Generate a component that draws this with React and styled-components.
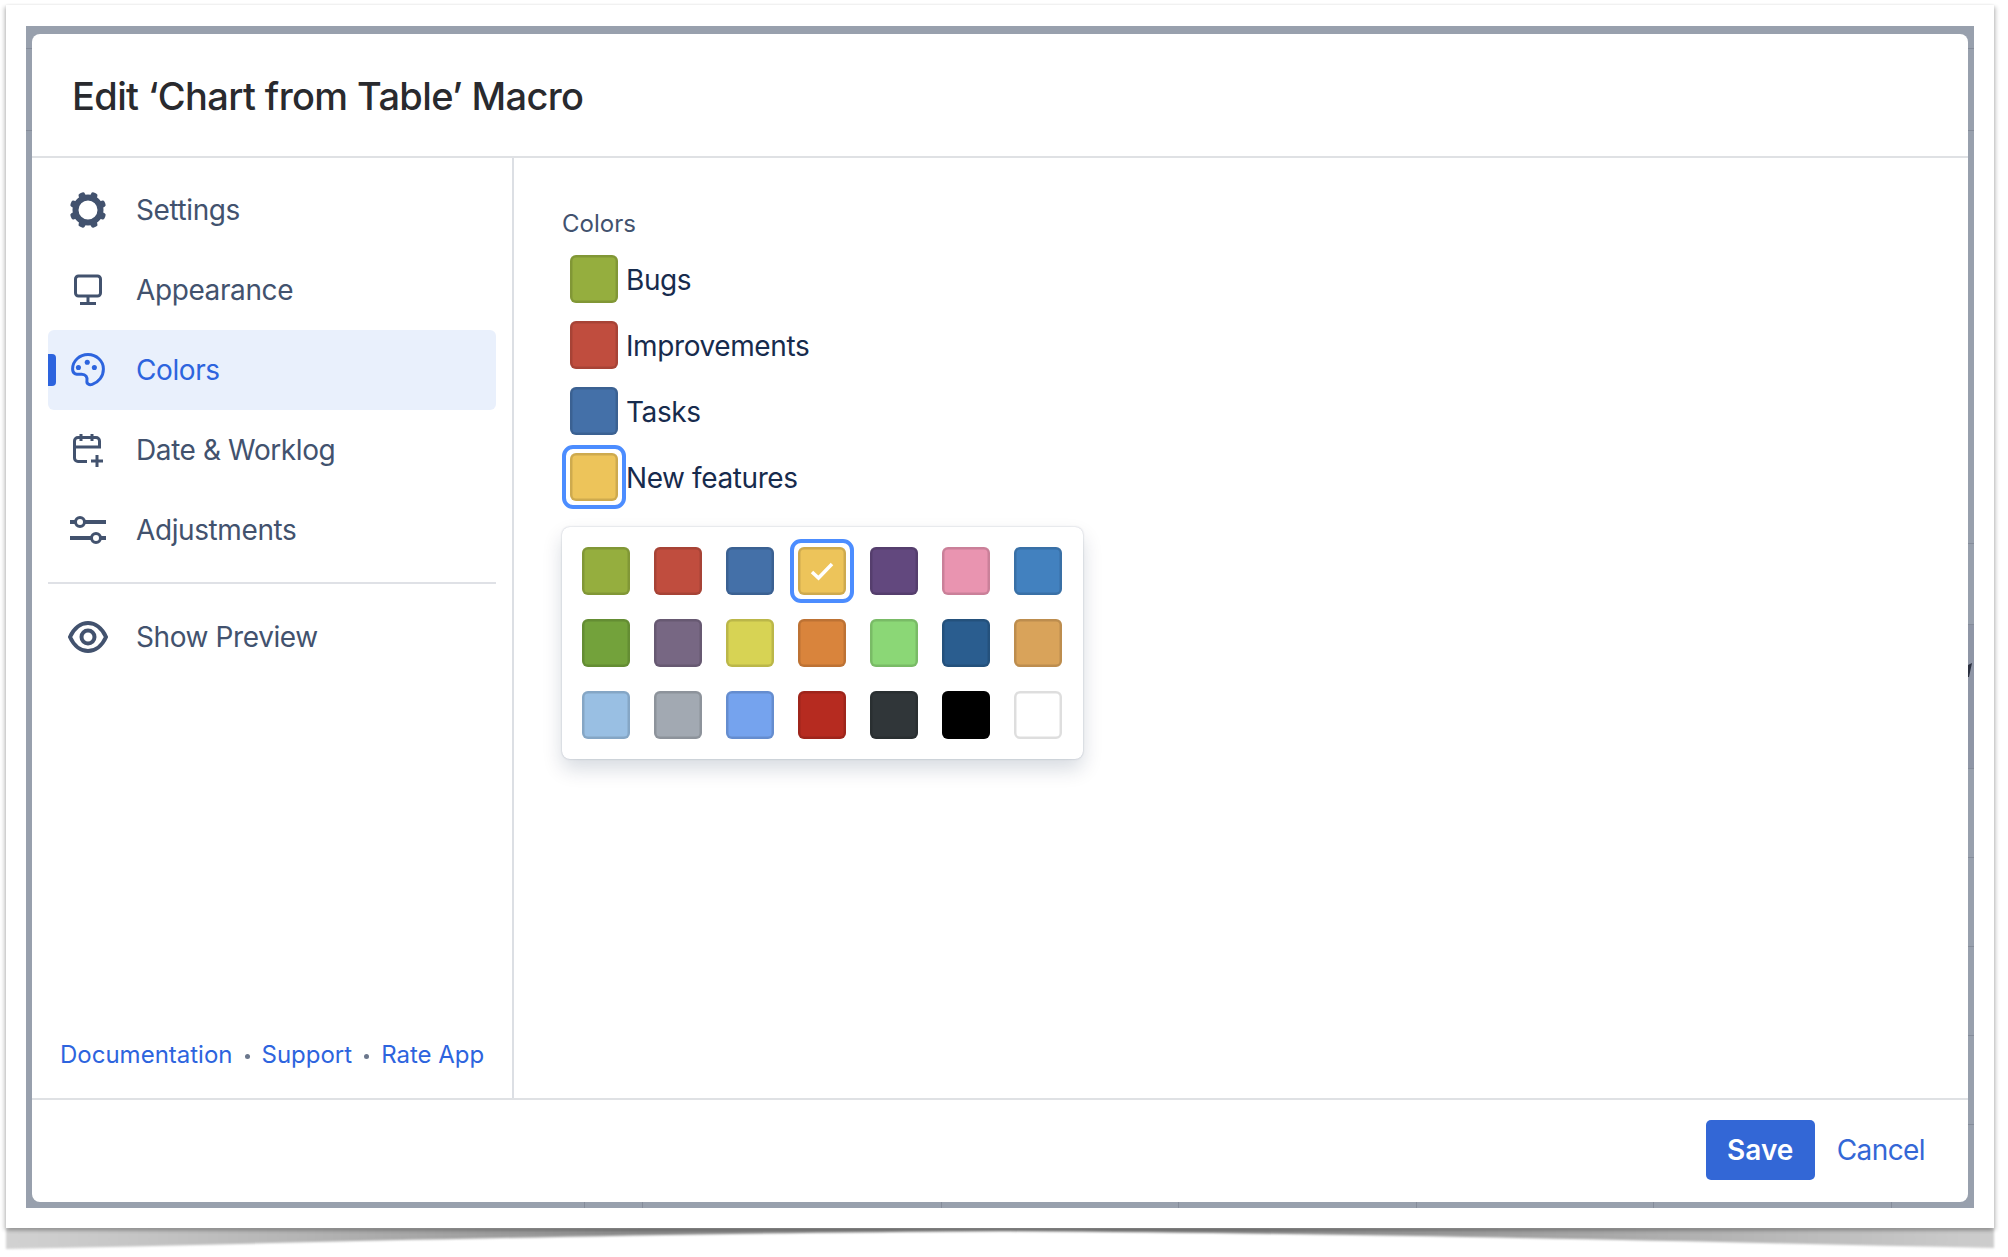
import React from "react";
import styled, { createGlobalStyle } from "styled-components";

const NAV_TEXT = "#42526e";
const BLUE = "#2d64de";

const legend = [
  { name: "Bugs", color: "#95ae3e" },
  { name: "Improvements", color: "#c04d3e" },
  { name: "Tasks", color: "#4470a8" },
  { name: "New features", color: "#edc45a", focused: true },
];

const palette = [
  "#95ae3e", "#c04d3e", "#4470a8", "#edc45a", "#62487e", "#e994b0", "#4281bf",
  "#73a23b", "#776783", "#d7d354", "#d9843c", "#8bd776", "#2a5d8f", "#d9a35a",
  "#99bfe3", "#a2a9b2", "#75a3ee", "#b62b20", "#303639", "#000000", "#ffffff",
];

const GearIcon = () => (
  <svg width="40" height="40" viewBox="0 0 40 40">
    <circle cx="20" cy="20" r="12.5" fill="none" stroke="currentColor" strokeWidth="6" />
    {[22.5, 67.5, 112.5, 157.5, 202.5, 247.5, 292.5, 337.5].map((angle) => (
      <rect
        key={angle}
        x="16.6"
        y="1.6"
        width="6.8"
        height="8"
        rx="2.2"
        fill="currentColor"
        transform={`rotate(${angle} 20 20)`}
      />
    ))}
  </svg>
);

const MonitorIcon = () => (
  <svg width="32" height="32" viewBox="0 0 32 32" fill="none" stroke="currentColor">
    <rect x="3.5" y="2" width="25" height="20" rx="3" strokeWidth="3" />
    <path d="M16 22v7" strokeWidth="3" />
    <path d="M8 29.5h16" strokeWidth="3" />
  </svg>
);

const PaletteIcon = () => (
  <svg width="34" height="34" viewBox="0 0 32 32" fill="none" stroke="currentColor" strokeWidth="2.8">
    <path d="M16 1.5C8 1.5 1.5 7.5 1.5 15c0 6 5.5 5 8.5 5 4 0 5.5 3 5 6-.5 3 2 4.500 5 3.500 6-2 10.500-7.500 10.500-14.500C30.500 7.500 24 1.500 16 1.500Z" />
    <circle cx="7" cy="13.700" r="2.400" fill="currentColor" stroke="none" />
    <circle cx="15.300" cy="8.700" r="2.400" fill="currentColor" stroke="none" />
    <circle cx="22" cy="13.700" r="2.400" fill="currentColor" stroke="none" />
  </svg>
);

const CalendarPlusIcon = () => (
  <svg width="34" height="36" viewBox="0 0 34 36" fill="none" stroke="currentColor" strokeWidth="3">
    <path d="M16 29.500H7A3.500 3.500 0 0 1 3.500 26V9A3.500 3.500 0 0 1 7 5.500H25A3.500 3.500 0 0 1 28.500 9V15H3.500" />
    <path d="M10 2v7M21 2v7" />
    <path d="M20 29h12M26 23v12" />
  </svg>
);

const SlidersIcon = () => (
  <svg width="36" height="28" viewBox="0 0 36 28" stroke="currentColor">
    <path d="M0 6h36M0 22h36" strokeWidth="4" />
    <circle cx="10" cy="6" r="4.500" fill="#fff" strokeWidth="3" />
    <circle cx="26" cy="22" r="4.500" fill="#fff" strokeWidth="3" />
  </svg>
);

const EyeIcon = () => (
  <svg width="40" height="32" viewBox="0 0 40 32" fill="none" stroke="currentColor" strokeWidth="4">
    <path d="M2 16C6 7 13 2 20 2s14 5 18 14c-4 9-11 14-18 14S6 25 2 16Z" />
    <circle cx="20" cy="16" r="6.500" />
  </svg>
);

const CheckIcon = () => (
  <svg width="24" height="20" viewBox="0 0 24 20" fill="none" stroke="#fff" strokeWidth="3.500">
    <path d="M2 11l6.500 6L22 3" />
  </svg>
);

const App = () => (
  <>
    <GlobalStyle />
    <Page>
      <CurlShadow viewBox="0 0 2008 40" preserveAspectRatio="none">
        <defs>
          <linearGradient id="curl" x1="0" x2="1" y1="0" y2="0">
            <stop offset="0" stopColor="#d2d2d2" />
            <stop offset="0.15" stopColor="#b4b4b4" />
            <stop offset="0.32" stopColor="#8c8c8c" />
            <stop offset="0.62" stopColor="#8a8a8a" />
            <stop offset="0.8" stopColor="#a8a8a8" />
            <stop offset="1" stopColor="#cdcdcd" />
          </linearGradient>
        </defs>
        <path
          d="M6 0H1994V20C1700 14 1400 6 1000 3C600 6 300 15 6 21Z"
          fill="url(#curl)"
        />
      </CurlShadow>
      <Sheet>
        <Frame>
          <Modal>
            <Header>
              <Title>Edit ‘Chart from Table’ Macro</Title>
            </Header>
            <Body>
              <Sidebar>
                <NavItem>
                  <NavIcon><GearIcon /></NavIcon>
                  Settings
                </NavItem>
                <NavItem>
                  <NavIcon><MonitorIcon /></NavIcon>
                  Appearance
                </NavItem>
                <NavItem $active>
                  <NavIcon><PaletteIcon /></NavIcon>
                  Colors
                </NavItem>
                <NavItem>
                  <NavIcon><CalendarPlusIcon /></NavIcon>
                  Date &amp; Worklog
                </NavItem>
                <NavItem>
                  <NavIcon><SlidersIcon /></NavIcon>
                  Adjustments
                </NavItem>
                <NavDivider />
                <NavItem>
                  <NavIcon><EyeIcon /></NavIcon>
                  Show Preview
                </NavItem>
                <SideLinks>
                  <TextLink>Documentation</TextLink>
                  <Dot />
                  <TextLink>Support</TextLink>
                  <Dot />
                  <TextLink>Rate App</TextLink>
                </SideLinks>
              </Sidebar>
              <Content>
                <FieldLabel>Colors</FieldLabel>
                <Legend>
                  {legend.map((item) => (
                    <LegendRow key={item.name}>
                      <Swatch $color={item.color} $focused={item.focused} />
                      <LegendName>{item.name}</LegendName>
                    </LegendRow>
                  ))}
                </Legend>
                <Picker>
                  {palette.map((color, i) => (
                    <Swatch key={i} $color={color} $focused={i === 3}>
                      {i === 3 && <CheckIcon />}
                    </Swatch>
                  ))}
                </Picker>
              </Content>
            </Body>
            <Footer>
              <SaveButton>Save</SaveButton>
              <CancelLink>Cancel</CancelLink>
            </Footer>
          </Modal>
        </Frame>
      </Sheet>
    </Page>
  </>
);

const GlobalStyle = createGlobalStyle`
  html, body {
    margin: 0;
    height: 100%;
    background: #fff;
    overflow: hidden;
  }
  * {
    box-sizing: border-box;
  }
`;

const Page = styled.div`
  position: relative;
  width: 2008px;
  height: 1257px;
  padding: 5px 14px 29px 6px;
  font-family: Inter, "Liberation Sans", sans-serif;
`;

const CurlShadow = styled.svg`
  position: absolute;
  left: 0;
  top: 1228px;
  width: 2008px;
  height: 40px;
  filter: blur(1px);
`;

const Sheet = styled.div`
  position: relative;
  height: 100%;
  padding: 21px 20px 20px 20px;
  background: #fff;
  box-shadow: -2px 2px 4px rgba(0, 0, 0, 0.2), 2px 2px 4px rgba(0, 0, 0, 0.2),
    0 0 2px rgba(0, 0, 0, 0.06);
`;

const Frame = styled.div`
  position: relative;
  height: 100%;
  padding: 8px 6px 6px 6px;
  background:
    linear-gradient(#858c9a, #858c9a) 0 22px / 100% 1px no-repeat,
    linear-gradient(#858c9a, #858c9a) 0 104px / 100% 1px no-repeat,
    linear-gradient(#858c9a, #858c9a) 100% 517px / 6px 1px no-repeat,
    linear-gradient(#858c9a, #858c9a) 100% 598px / 6px 1px no-repeat,
    linear-gradient(#858c9a, #858c9a) 100% 742px / 6px 1px no-repeat,
    linear-gradient(#858c9a, #858c9a) 100% 831px / 6px 1px no-repeat,
    linear-gradient(#858c9a, #858c9a) 100% 920px / 6px 1px no-repeat,
    linear-gradient(#858c9a, #858c9a) 100% 1009px / 6px 1px no-repeat,
    linear-gradient(#858c9a, #858c9a) 100% 1098px / 6px 1px no-repeat,
    linear-gradient(#8f96a6, #8f96a6) 100% 598px / 6px 144px no-repeat,
    linear-gradient(#858c9a, #858c9a) 558px 100% / 1px 6px no-repeat,
    linear-gradient(#858c9a, #858c9a) 616px 100% / 1px 6px no-repeat,
    linear-gradient(#858c9a, #858c9a) 915px 100% / 1px 6px no-repeat,
    linear-gradient(#858c9a, #858c9a) 1152px 100% / 1px 6px no-repeat,
    linear-gradient(#858c9a, #858c9a) 1390px 100% / 1px 6px no-repeat,
    linear-gradient(#858c9a, #858c9a) 1627px 100% / 1px 6px no-repeat,
    linear-gradient(#858c9a, #858c9a) 1865px 100% / 1px 6px no-repeat,
    #98a0ad;

  &::after {
    content: "";
    position: absolute;
    right: 2px;
    top: 637px;
    width: 4px;
    height: 14px;
    background: #2b3040;
    clip-path: polygon(0 15%, 100% 0, 25% 100%, 0 100%);
  }
`;

const Modal = styled.div`
  display: flex;
  flex-direction: column;
  height: 100%;
  background: #fff;
  border-radius: 8px;
  overflow: hidden;
`;

const Header = styled.header`
  flex: none;
  height: 124px;
  padding: 2px 0 0 40px;
  display: flex;
  align-items: center;
  border-bottom: 2px solid #dfe1e4;
`;

const Title = styled.h1`
  margin: 0;
  font-size: 38px;
  font-weight: 500;
  letter-spacing: -0.62px;
  color: #292a2e;
`;

const Body = styled.div`
  flex: 1;
  min-height: 0;
  display: flex;
`;

const Sidebar = styled.nav`
  flex: none;
  width: 482px;
  padding: 12px 16px 0 16px;
  display: flex;
  flex-direction: column;
  border-right: 2px solid #dcdfe4;
`;

const NavItem = styled.div`
  position: relative;
  flex: none;
  height: 80px;
  display: flex;
  align-items: center;
  border-radius: 6px;
  font-size: 28px;
  letter-spacing: -0.4px;
  color: ${(p) => (p.$active ? BLUE : NAV_TEXT)};
  background: ${(p) => (p.$active ? "#e9f0fc" : "transparent")};

  &::before {
    content: ${(p) => (p.$active ? '""' : "none")};
    position: absolute;
    left: 0;
    top: 24px;
    width: 8px;
    height: 32px;
    border-radius: 0 4px 4px 0;
    background: ${BLUE};
  }
`;

const NavIcon = styled.span`
  flex: none;
  width: 88px;
  padding-right: 8px;
  display: flex;
  justify-content: center;
  align-items: center;
`;

const NavDivider = styled.div`
  flex: none;
  height: 2px;
  margin: 12px 0 13px;
  background: #dfe1e6;
`;

const SideLinks = styled.div`
  margin-top: auto;
  height: 61px;
  padding-left: 12px;
  display: flex;
  align-items: flex-start;
  gap: 12px;
  font-size: 24px;
  line-height: 36px;
`;

const TextLink = styled.a`
  color: ${BLUE};
`;

const Dot = styled.span`
  flex: none;
  width: 5px;
  height: 5px;
  margin-top: 17px;
  border-radius: 50%;
  background: #6b778c;
`;

const Content = styled.section`
  flex: 1;
  padding: 48px 0 0 48px;
`;

const FieldLabel = styled.div`
  font-size: 24px;
  line-height: 36px;
  color: ${NAV_TEXT};
`;

const Legend = styled.div`
  margin-top: 13px;
  padding-left: 8px;
  display: flex;
  flex-direction: column;
  gap: 18px;
`;

const LegendRow = styled.div`
  display: flex;
  align-items: center;
  gap: 8px;
`;

const LegendName = styled.span`
  padding-top: 1px;
  font-size: 28px;
  letter-spacing: -0.4px;
  color: #172b4d;
`;

const Swatch = styled.div`
  position: relative;
  flex: none;
  width: 48px;
  height: 48px;
  display: flex;
  align-items: center;
  justify-content: center;
  border-radius: 6px;
  background: ${(p) => p.$color};
  box-shadow: inset 0 0 0 2.5px rgba(0, 0, 0, 0.13);

  &::before {
    content: ${(p) => (p.$focused ? '""' : "none")};
    position: absolute;
    inset: -8px;
    border: 4px solid #4c8dff;
    border-radius: 11px;
  }
`;

const Picker = styled.div`
  width: 521px;
  margin-top: 26px;
  padding: 20px;
  display: grid;
  grid-template-columns: repeat(7, 48px);
  gap: 24px;
  background: #fff;
  border-radius: 8px;
  box-shadow: 0 0 2px rgba(9, 30, 66, 0.28), 0 10px 20px rgba(9, 30, 66, 0.16);
`;

const Footer = styled.footer`
  flex: none;
  height: 104px;
  padding: 20px 43px 0 0;
  display: flex;
  justify-content: flex-end;
  align-items: flex-start;
  gap: 22px;
  border-top: 2px solid #dfe1e4;
`;

const SaveButton = styled.button`
  width: 109px;
  height: 60px;
  border: 0;
  border-radius: 5px;
  background: #3367d6;
  color: #fff;
  font: 600 28px Inter, "Liberation Sans", sans-serif;
`;

const CancelLink = styled.a`
  line-height: 60px;
  font-size: 28px;
  letter-spacing: -0.6px;
  color: #3367d6;
`;

export default App;
